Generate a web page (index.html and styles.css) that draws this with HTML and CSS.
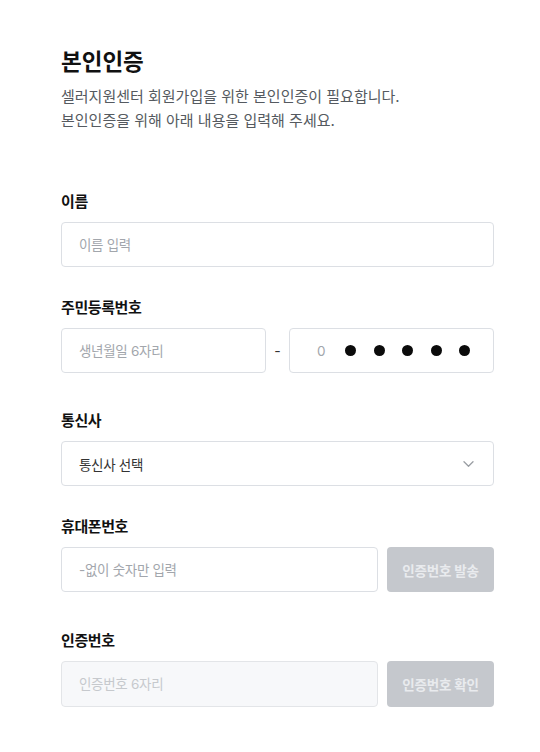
FILE: index.html
```html
<!DOCTYPE html>
<html lang="ko">
<head>
<meta charset="utf-8">
<title>본인인증</title>
<link rel="stylesheet" href="styles.css">
</head>
<body>
<main class="page">
  <header class="head">
    <h1 class="title">본인인증</h1>
    <p class="desc">셀러지원센터 회원가입을 위한 본인인증이 필요합니다.<br>본인인증을 위해 아래 내용을 입력해 주세요.</p>
  </header>

  <section class="field field-first">
    <div class="label">이름</div>
    <input class="box input" type="text" placeholder="이름 입력">
  </section>

  <section class="field field-sm">
    <div class="label">주민등록번호</div>
    <div class="row ssn">
      <input class="box input" type="text" placeholder="생년월일 6자리">
      <span class="dash">-</span>
      <div class="box masked">
        <span class="zero">0</span>
        <span class="dot"></span><span class="dot"></span><span class="dot"></span><span class="dot"></span><span class="dot"></span>
      </div>
    </div>
  </section>

  <section class="field field-md">
    <div class="label">통신사</div>
    <div class="box select">
      <span>통신사 선택</span>
      <svg class="chev" width="11" height="6" viewBox="0 0 11 6"><path d="M1 0.8l4.5 4.4 4.5-4.4" fill="none" stroke="#9a9ea3" stroke-width="1.3" stroke-linecap="round" stroke-linejoin="round"/></svg>
    </div>
  </section>

  <section class="field field-sm">
    <div class="label">휴대폰번호</div>
    <div class="row">
      <input class="box input grow" type="text" placeholder="-없이 숫자만 입력">
      <button class="btn" type="button">인증번호 발송</button>
    </div>
  </section>

  <section class="field field-lg">
    <div class="label">인증번호</div>
    <div class="row">
      <input class="box input grow disabled tall" type="text" placeholder="인증번호 6자리" disabled>
      <button class="btn tall" type="button">인증번호 확인</button>
    </div>
  </section>
</main>
</body>
</html>
```

FILE: styles.css
```css
* { box-sizing: border-box; }
html, body { margin: 0; padding: 0; background: #fff; }
body {
  font-family: "Inter", "Noto Sans CJK KR", sans-serif;
  color: #111;
}
.page {
  width: 433px;
  margin-left: 61px;
  padding-top: 47px;
}
.title {
  margin: 0;
  font-size: 22.5px;
  line-height: 30px;
  font-weight: 700;
  letter-spacing: 0;
  color: #111;
}
.desc {
  margin: 8px 0 0;
  font-size: 15px;
  line-height: 24px;
  color: #555a60;
  letter-spacing: 0;
}
.field-first { margin-top: 59px; }
.field-sm { margin-top: 31px; }
.field-md { margin-top: 38px; }
.field-lg { margin-top: 39px; }
.label {
  font-size: 15px;
  line-height: 20px;
  font-weight: 700;
  letter-spacing: -0.4px;
  color: #111;
  margin-bottom: 10px;
}
.box {
  display: block;
  width: 100%;
  height: 45px;
  border: 1px solid #dcdfe4;
  border-radius: 4px;
  background: #fff;
}
.input {
  padding: 0 17px;
  font-family: inherit;
  font-size: 13.5px;
  letter-spacing: -0.3px;
  color: #111;
  outline: none;
}
.input::placeholder { color: #a2a6ac; }
.row {
  display: flex;
  align-items: center;
}
.ssn .input { width: 205px; flex: none; }
.dash {
  width: 23px;
  text-align: center;
  font-size: 14px;
  color: #333;
}
.masked {
  width: 205px;
  flex: none;
  display: flex;
  align-items: center;
  padding-left: 27px;
  gap: 17.5px;
}
.zero {
  font-size: 13.5px;
  color: #a2a6ac;
  margin-right: 2px;
}
.dot {
  width: 11px;
  height: 11px;
  border-radius: 50%;
  background: #0b0b0b;
}
.select {
  display: flex;
  align-items: center;
  justify-content: space-between;
  padding: 0 19px 0 17px;
  font-size: 13.5px;
  letter-spacing: -0.3px;
  color: #333;
}
.chev { display: block; }
.grow { flex: 1; width: auto; min-width: 0; }
.btn {
  flex: none;
  width: 107px;
  height: 45px;
  margin-left: 9px;
  border: 0;
  border-radius: 4px;
  background: #c5c8cd;
  color: #e9ebee;
  font-family: inherit;
  font-size: 13.5px;
  font-weight: 700;
  letter-spacing: -0.2px;
  padding: 0;
}
.tall { height: 46px; }
.disabled {
  background: #f7f8fa;
  border-color: #e3e5e8;
}
.disabled::placeholder { color: #c6c9cd; }
```
